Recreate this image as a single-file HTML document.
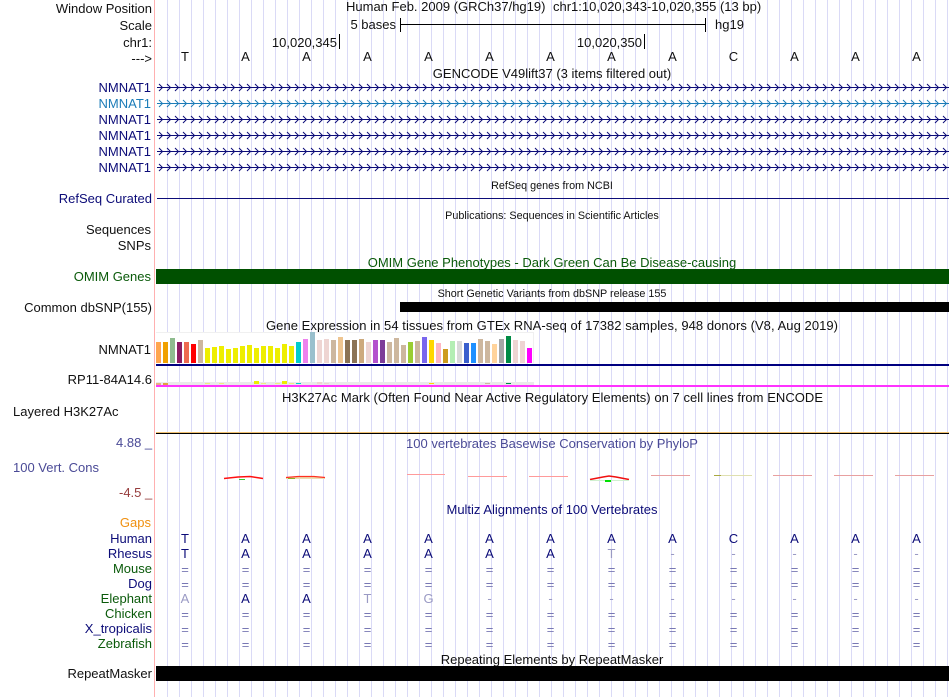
<!DOCTYPE html>
<html>
<head>
<meta charset="utf-8">
<style>
html,body{margin:0;padding:0;background:#fff}
#p{position:relative;width:950px;height:697px;overflow:hidden;background:#fff}
#g{position:absolute;left:167px;top:0;width:783px;height:697px;background-image:linear-gradient(90deg,#dadaf6 0,#dadaf6 1px,transparent 1px,transparent 12px);background-size:12px 697px;background-position:0 0;background-repeat:repeat-x}
svg{position:absolute;left:0;top:0}
text{font-family:"Liberation Sans",sans-serif;font-size:13px;fill:#111}
.r{text-anchor:end}
.m{text-anchor:middle}
.n{fill:#0c0c78}
.g{fill:#0a5a0a}
.b{fill:#0c0c78;font-size:13px;text-anchor:middle}
.e{fill:#7878b4;text-anchor:middle}
.f{fill:#9a9ac4;text-anchor:middle}
.s{font-size:10.800px}
</style>
</head>
<body>
<div id="p">
<div id="g"></div>
<svg width="950" height="697" viewBox="0 0 950 697">
<defs>
<pattern id="c2" x="157" y="83.500" width="8" height="16" patternUnits="userSpaceOnUse"><path d="M2 .5L5.500 4L2 7.500" fill="none" stroke="#0c0c78" stroke-width="1"/></pattern>
<pattern id="c3" x="157" y="99.500" width="8" height="16" patternUnits="userSpaceOnUse"><path d="M2 .5L5.500 4L2 7.500" fill="none" stroke="#1c7cb8" stroke-width="1"/></pattern>
</defs>

<rect x="154" y="0" width="1" height="697" fill="#ffb0b0"/>

<!-- header labels -->
<text class="r" x="152" y="13">Window Position</text>
<text class="r" x="152" y="30">Scale</text>
<text class="r" x="152" y="47">chr1:</text>
<text class="r" x="152" y="63">---&gt;</text>
<text x="346" y="11">Human Feb. 2009 (GRCh37/hg19)</text>
<text x="553" y="11">chr1:10,020,343-10,020,355 (13 bp)</text>
<text class="r" x="396" y="29">5 bases</text>
<text x="715" y="29">hg19</text>
<path d="M400.500 18V32M400.500 24.500H705.500M705.500 18V32" stroke="#000" stroke-width="1" fill="none"/>
<text class="r" x="337" y="47">10,020,345</text>
<path d="M339.500 34V49M644.500 34V49" stroke="#000" stroke-width="1"/>
<text class="r" x="642" y="47">10,020,350</text>
<g class="m">
<text class="m" x="185" y="61">T</text><text class="m" x="245.500" y="61">A</text><text class="m" x="306.500" y="61">A</text><text class="m" x="367.500" y="61">A</text><text class="m" x="428.500" y="61">A</text><text class="m" x="489.500" y="61">A</text><text class="m" x="550.500" y="61">A</text><text class="m" x="611.500" y="61">A</text><text class="m" x="672.500" y="61">A</text><text class="m" x="733.500" y="61">C</text><text class="m" x="794.500" y="61">A</text><text class="m" x="855.500" y="61">A</text><text class="m" x="916.500" y="61">A</text>
</g>
<text class="m" x="552" y="78">GENCODE V49lift37 (3 items filtered out)</text>

<!-- gene rows -->
<text class="r n" x="151" y="92">NMNAT1</text>
<text class="r" style="fill:#1c7cb8" x="151" y="108">NMNAT1</text>
<text class="r n" x="151" y="124">NMNAT1</text>
<text class="r n" x="151" y="140">NMNAT1</text>
<text class="r n" x="151" y="156">NMNAT1</text>
<text class="r n" x="151" y="172">NMNAT1</text>
<g id="genes">
<rect x="157" y="87" width="792" height="1" fill="#0c0c78"/><rect x="157" y="83.500" width="792" height="8" fill="url(#c2)"/>
<rect x="157" y="103" width="792" height="1" fill="#1c7cb8"/><rect x="157" y="99.500" width="792" height="8" fill="url(#c3)"/>
<rect x="157" y="119" width="792" height="1" fill="#0c0c78"/><rect x="157" y="115.500" width="792" height="8" fill="url(#c2)"/>
<rect x="157" y="135" width="792" height="1" fill="#0c0c78"/><rect x="157" y="131.500" width="792" height="8" fill="url(#c2)"/>
<rect x="157" y="151" width="792" height="1" fill="#0c0c78"/><rect x="157" y="147.500" width="792" height="8" fill="url(#c2)"/>
<rect x="157" y="167" width="792" height="1" fill="#0c0c78"/><rect x="157" y="163.500" width="792" height="8" fill="url(#c2)"/>
</g>

<text class="m s" x="552" y="189">RefSeq genes from NCBI</text>
<text class="r n" x="152" y="203">RefSeq Curated</text>
<rect x="157" y="198" width="792" height="1" fill="#0c0c78"/>
<text class="m s" x="552" y="219">Publications: Sequences in Scientific Articles</text>
<text class="r" x="151" y="234">Sequences</text>
<text class="r" x="151" y="250">SNPs</text>
<text class="m" x="552" y="267" style="fill:#0a5a0a">OMIM Gene Phenotypes - Dark Green Can Be Disease-causing</text>
<text class="r g" x="151" y="281">OMIM Genes</text>
<rect x="156" y="269" width="793" height="15" fill="#005000"/>
<text class="r" x="152" y="312">Common dbSNP(155)</text>
<text class="m s" x="552" y="297">Short Genetic Variants from dbSNP release 155</text>
<rect x="400" y="302" width="549" height="10" fill="#000"/>
<text x="266" y="330" textLength="572">Gene Expression in 54 tissues from GTEx RNA-seq of 17382 samples, 948 donors (V8, Aug 2019)</text>

<!-- GTEx -->
<rect x="156" y="332" width="378" height="31" fill="#fff"/>
<rect x="156" y="332" width="378" height="1" fill="#f0f0f0"/>
<rect x="533" y="332" width="1" height="31" fill="#f0f0f0"/>
<text class="r" x="151" y="354">NMNAT1</text>
<g>
<rect x="156" y="342" width="5" height="21" fill="#ffa54f"/><rect x="163" y="342" width="5" height="21" fill="#f0a000"/><rect x="170" y="338" width="5" height="25" fill="#8fbc8f"/><rect x="177" y="342" width="5" height="21" fill="#8b1c62"/><rect x="184" y="342" width="5" height="21" fill="#ee6a50"/><rect x="191" y="344" width="5" height="19" fill="#ff0000"/><rect x="198" y="340" width="5" height="23" fill="#cdb79e"/>
<rect x="205" y="348" width="5" height="15" fill="#eeee00"/><rect x="212" y="347" width="5" height="16" fill="#eeee00"/><rect x="219" y="346" width="5" height="17" fill="#eeee00"/><rect x="226" y="349" width="5" height="14" fill="#eeee00"/><rect x="233" y="348" width="5" height="15" fill="#eeee00"/><rect x="240" y="346" width="5" height="17" fill="#eeee00"/><rect x="247" y="345" width="5" height="18" fill="#eeee00"/><rect x="254" y="348" width="5" height="15" fill="#eeee00"/><rect x="261" y="346" width="5" height="17" fill="#eeee00"/><rect x="268" y="346" width="5" height="17" fill="#eeee00"/><rect x="275" y="348" width="5" height="15" fill="#eeee00"/><rect x="282" y="344" width="5" height="19" fill="#eeee00"/><rect x="289" y="346" width="5" height="17" fill="#eeee00"/>
<rect x="296" y="342" width="5" height="21" fill="#00cdcd"/><rect x="303" y="339" width="5" height="24" fill="#ee82ee"/><rect x="310" y="332" width="5" height="31" fill="#9ac0cd"/><rect x="317" y="340" width="5" height="23" fill="#eed5d2"/><rect x="324" y="339" width="5" height="24" fill="#eed5d2"/><rect x="331" y="340" width="5" height="23" fill="#cdb79e"/><rect x="338" y="337" width="5" height="26" fill="#eec591"/><rect x="345" y="340" width="5" height="23" fill="#8b7355"/><rect x="352" y="340" width="5" height="23" fill="#8b7355"/><rect x="359" y="339" width="5" height="24" fill="#cdaa7d"/><rect x="366" y="342" width="5" height="21" fill="#eed5d2"/><rect x="373" y="340" width="5" height="23" fill="#b452cd"/><rect x="380" y="340" width="5" height="23" fill="#7d3c98"/><rect x="387" y="342" width="5" height="21" fill="#cdb79e"/><rect x="394" y="338" width="5" height="25" fill="#cdb79e"/><rect x="401" y="345" width="5" height="18" fill="#cdb79e"/><rect x="408" y="342" width="5" height="21" fill="#9acd32"/><rect x="415" y="341" width="5" height="22" fill="#cdb79e"/><rect x="422" y="337" width="5" height="26" fill="#7a67ee"/><rect x="429" y="340" width="5" height="23" fill="#ffd700"/><rect x="436" y="343" width="5" height="20" fill="#ffb6c1"/><rect x="443" y="349" width="5" height="14" fill="#cd9b1d"/><rect x="450" y="341" width="5" height="22" fill="#b4eeb4"/><rect x="457" y="341" width="5" height="22" fill="#d9d9d9"/><rect x="464" y="343" width="5" height="20" fill="#3a5fcd"/><rect x="471" y="343" width="5" height="20" fill="#1e90ff"/><rect x="478" y="339" width="5" height="24" fill="#cdb79e"/><rect x="485" y="341" width="5" height="22" fill="#cdb79e"/><rect x="492" y="344" width="5" height="19" fill="#ffd39b"/><rect x="499" y="339" width="5" height="24" fill="#a6a6a6"/><rect x="506" y="336" width="5" height="27" fill="#008b45"/><rect x="513" y="340" width="5" height="23" fill="#eed5d2"/><rect x="520" y="341" width="5" height="22" fill="#eed5d2"/><rect x="527" y="348" width="5" height="15" fill="#ff00ff"/>
</g>
<rect x="156" y="364" width="793" height="2" fill="#000080"/>

<text class="r" x="152" y="384">RP11-84A14.6</text>
<rect x="156" y="382" width="378" height="3" fill="#eaeaea"/>
<rect x="156" y="383" width="5" height="2" fill="#e8b080"/><rect x="163" y="383" width="5" height="2" fill="#e0a040"/><rect x="205" y="383" width="5" height="1" fill="#eeee80"/><rect x="219" y="383" width="5" height="1" fill="#eeee80"/><rect x="254" y="381" width="5" height="3" fill="#eeee00"/><rect x="261" y="383" width="5" height="1" fill="#eeee80"/><rect x="275" y="383" width="5" height="1" fill="#eeee80"/><rect x="282" y="381" width="5" height="3" fill="#eeee00"/><rect x="289" y="383" width="5" height="1" fill="#eeee80"/><rect x="296" y="383" width="5" height="1" fill="#00cdcd"/><rect x="317" y="382" width="5" height="2" fill="#eed5d2"/><rect x="324" y="383" width="5" height="1" fill="#eed5d2"/><rect x="429" y="383" width="5" height="1" fill="#ffd700"/><rect x="485" y="383" width="5" height="1" fill="#cdb79e"/><rect x="506" y="383" width="5" height="1" fill="#008b45"/>
<rect x="156" y="385" width="793" height="2" fill="#ff33ff"/>

<text x="282" y="402" textLength="541">H3K27Ac Mark (Often Found Near Active Regulatory Elements) on 7 cell lines from ENCODE</text>
<text x="13" y="416">Layered H3K27Ac</text>
<rect x="156" y="432" width="793" height="1" fill="#f0c070"/>
<rect x="156" y="433" width="793" height="1" fill="#000"/>

<!-- conservation -->
<text x="116" y="447" style="fill:#4a4a96">4.88 _</text>
<text x="13" y="472" style="fill:#4a4a96">100 Vert. Cons</text>
<text x="119" y="497" style="fill:#963c3c">-4.5 _</text>
<text class="m" x="552" y="448" style="fill:#4a4a96">100 vertebrates Basewise Conservation by PhyloP</text>

<path d="M224 478.500L238 477L250 476.500L263 478.500" fill="none" stroke="#ff1010" stroke-width="1.500"/>
<rect x="239" y="479" width="6" height="1" fill="#30d030"/>
<path d="M286 478L298 476.800L314 476.800L325 478L325 479L286 479Z" fill="#ecdcb0"/>
<path d="M286 477.500L298 476.500L314 476.500L325 477.500" fill="none" stroke="#ff3020" stroke-width="1.200"/>
<rect x="288" y="478" width="7" height="1" fill="#90b020"/>
<rect x="407" y="474" width="38" height="1" fill="#ff9a9a"/>
<rect x="468" y="476" width="39" height="1" fill="#ff9a9a"/>
<rect x="529" y="476" width="39" height="1" fill="#ff9a9a"/>
<path d="M590 479.500L603 477L609 476L616 477L629 479.500" fill="none" stroke="#f01010" stroke-width="1.600"/>
<rect x="590" y="480" width="39" height="1" fill="#d0f0d0"/>
<rect x="605" y="480" width="6" height="2" fill="#00e000"/>
<rect x="651" y="475" width="39" height="1" fill="#e8a0a0"/>
<rect x="714" y="475" width="38" height="1" fill="#e0e0b0"/>
<rect x="714" y="475" width="7" height="1" fill="#a8a840"/>
<rect x="773" y="475" width="39" height="1" fill="#e8a0a0"/>
<rect x="834" y="475" width="39" height="1" fill="#e8a0a0"/>
<rect x="895" y="475" width="39" height="1" fill="#e8a0a0"/>

<text class="m" x="552" y="514" style="fill:#0c0c78">Multiz Alignments of 100 Vertebrates</text>
<text class="r" x="151" y="527" style="fill:#f09010">Gaps</text>
<text class="r n" x="152" y="543">Human</text>
<text class="r n" x="152" y="558">Rhesus</text>
<text class="r g" x="152" y="573">Mouse</text>
<text class="r n" x="152" y="588">Dog</text>
<text class="r g" x="152" y="603">Elephant</text>
<text class="r g" x="152" y="618">Chicken</text>
<text class="r n" x="152" y="633">X_tropicalis</text>
<text class="r g" x="152" y="648">Zebrafish</text>

<!-- Human -->
<text class="b" x="185" y="543">T</text><text class="b" x="245.500" y="543">A</text><text class="b" x="306.500" y="543">A</text><text class="b" x="367.500" y="543">A</text><text class="b" x="428.500" y="543">A</text><text class="b" x="489.500" y="543">A</text><text class="b" x="550.500" y="543">A</text><text class="b" x="611.500" y="543">A</text><text class="b" x="672.500" y="543">A</text><text class="b" x="733.500" y="543">C</text><text class="b" x="794.500" y="543">A</text><text class="b" x="855.500" y="543">A</text><text class="b" x="916.500" y="543">A</text>
<!-- Rhesus -->
<text class="b" x="185" y="558">T</text><text class="b" x="245.500" y="558">A</text><text class="b" x="306.500" y="558">A</text><text class="b" x="367.500" y="558">A</text><text class="b" x="428.500" y="558">A</text><text class="b" x="489.500" y="558">A</text><text class="b" x="550.500" y="558">A</text><text class="f" x="611.500" y="558">T</text><text class="f" x="672.500" y="558">-</text><text class="f" x="733.500" y="558">-</text><text class="f" x="794.500" y="558">-</text><text class="f" x="855.500" y="558">-</text><text class="f" x="916.500" y="558">-</text>
<!-- Mouse -->
<text class="e" x="185" y="574">=</text><text class="e" x="245.500" y="574">=</text><text class="e" x="306.500" y="574">=</text><text class="e" x="367.500" y="574">=</text><text class="e" x="428.500" y="574">=</text><text class="e" x="489.500" y="574">=</text><text class="e" x="550.500" y="574">=</text><text class="e" x="611.500" y="574">=</text><text class="e" x="672.500" y="574">=</text><text class="e" x="733.500" y="574">=</text><text class="e" x="794.500" y="574">=</text><text class="e" x="855.500" y="574">=</text><text class="e" x="916.500" y="574">=</text>
<!-- Dog -->
<text class="e" x="185" y="589">=</text><text class="e" x="245.500" y="589">=</text><text class="e" x="306.500" y="589">=</text><text class="e" x="367.500" y="589">=</text><text class="e" x="428.500" y="589">=</text><text class="e" x="489.500" y="589">=</text><text class="e" x="550.500" y="589">=</text><text class="e" x="611.500" y="589">=</text><text class="e" x="672.500" y="589">=</text><text class="e" x="733.500" y="589">=</text><text class="e" x="794.500" y="589">=</text><text class="e" x="855.500" y="589">=</text><text class="e" x="916.500" y="589">=</text>
<!-- Elephant -->
<text class="f" x="185" y="603">A</text><text class="b" x="245.500" y="603">A</text><text class="b" x="306.500" y="603">A</text><text class="f" x="367.500" y="603">T</text><text class="f" x="428.500" y="603">G</text><text class="f" x="489.500" y="603">-</text><text class="f" x="550.500" y="603">-</text><text class="f" x="611.500" y="603">-</text><text class="f" x="672.500" y="603">-</text><text class="f" x="733.500" y="603">-</text><text class="f" x="794.500" y="603">-</text><text class="f" x="855.500" y="603">-</text><text class="f" x="916.500" y="603">-</text>
<!-- Chicken -->
<text class="e" x="185" y="619">=</text><text class="e" x="245.500" y="619">=</text><text class="e" x="306.500" y="619">=</text><text class="e" x="367.500" y="619">=</text><text class="e" x="428.500" y="619">=</text><text class="e" x="489.500" y="619">=</text><text class="e" x="550.500" y="619">=</text><text class="e" x="611.500" y="619">=</text><text class="e" x="672.500" y="619">=</text><text class="e" x="733.500" y="619">=</text><text class="e" x="794.500" y="619">=</text><text class="e" x="855.500" y="619">=</text><text class="e" x="916.500" y="619">=</text>
<!-- X_tropicalis -->
<text class="e" x="185" y="634">=</text><text class="e" x="245.500" y="634">=</text><text class="e" x="306.500" y="634">=</text><text class="e" x="367.500" y="634">=</text><text class="e" x="428.500" y="634">=</text><text class="e" x="489.500" y="634">=</text><text class="e" x="550.500" y="634">=</text><text class="e" x="611.500" y="634">=</text><text class="e" x="672.500" y="634">=</text><text class="e" x="733.500" y="634">=</text><text class="e" x="794.500" y="634">=</text><text class="e" x="855.500" y="634">=</text><text class="e" x="916.500" y="634">=</text>
<!-- Zebrafish -->
<text class="e" x="185" y="649">=</text><text class="e" x="245.500" y="649">=</text><text class="e" x="306.500" y="649">=</text><text class="e" x="367.500" y="649">=</text><text class="e" x="428.500" y="649">=</text><text class="e" x="489.500" y="649">=</text><text class="e" x="550.500" y="649">=</text><text class="e" x="611.500" y="649">=</text><text class="e" x="672.500" y="649">=</text><text class="e" x="733.500" y="649">=</text><text class="e" x="794.500" y="649">=</text><text class="e" x="855.500" y="649">=</text><text class="e" x="916.500" y="649">=</text>

<text class="m" x="552" y="664">Repeating Elements by RepeatMasker</text>
<text class="r" x="152" y="678">RepeatMasker</text>
<rect x="156" y="666" width="793" height="15" fill="#000"/>
</svg>
</div>
</body>
</html>
